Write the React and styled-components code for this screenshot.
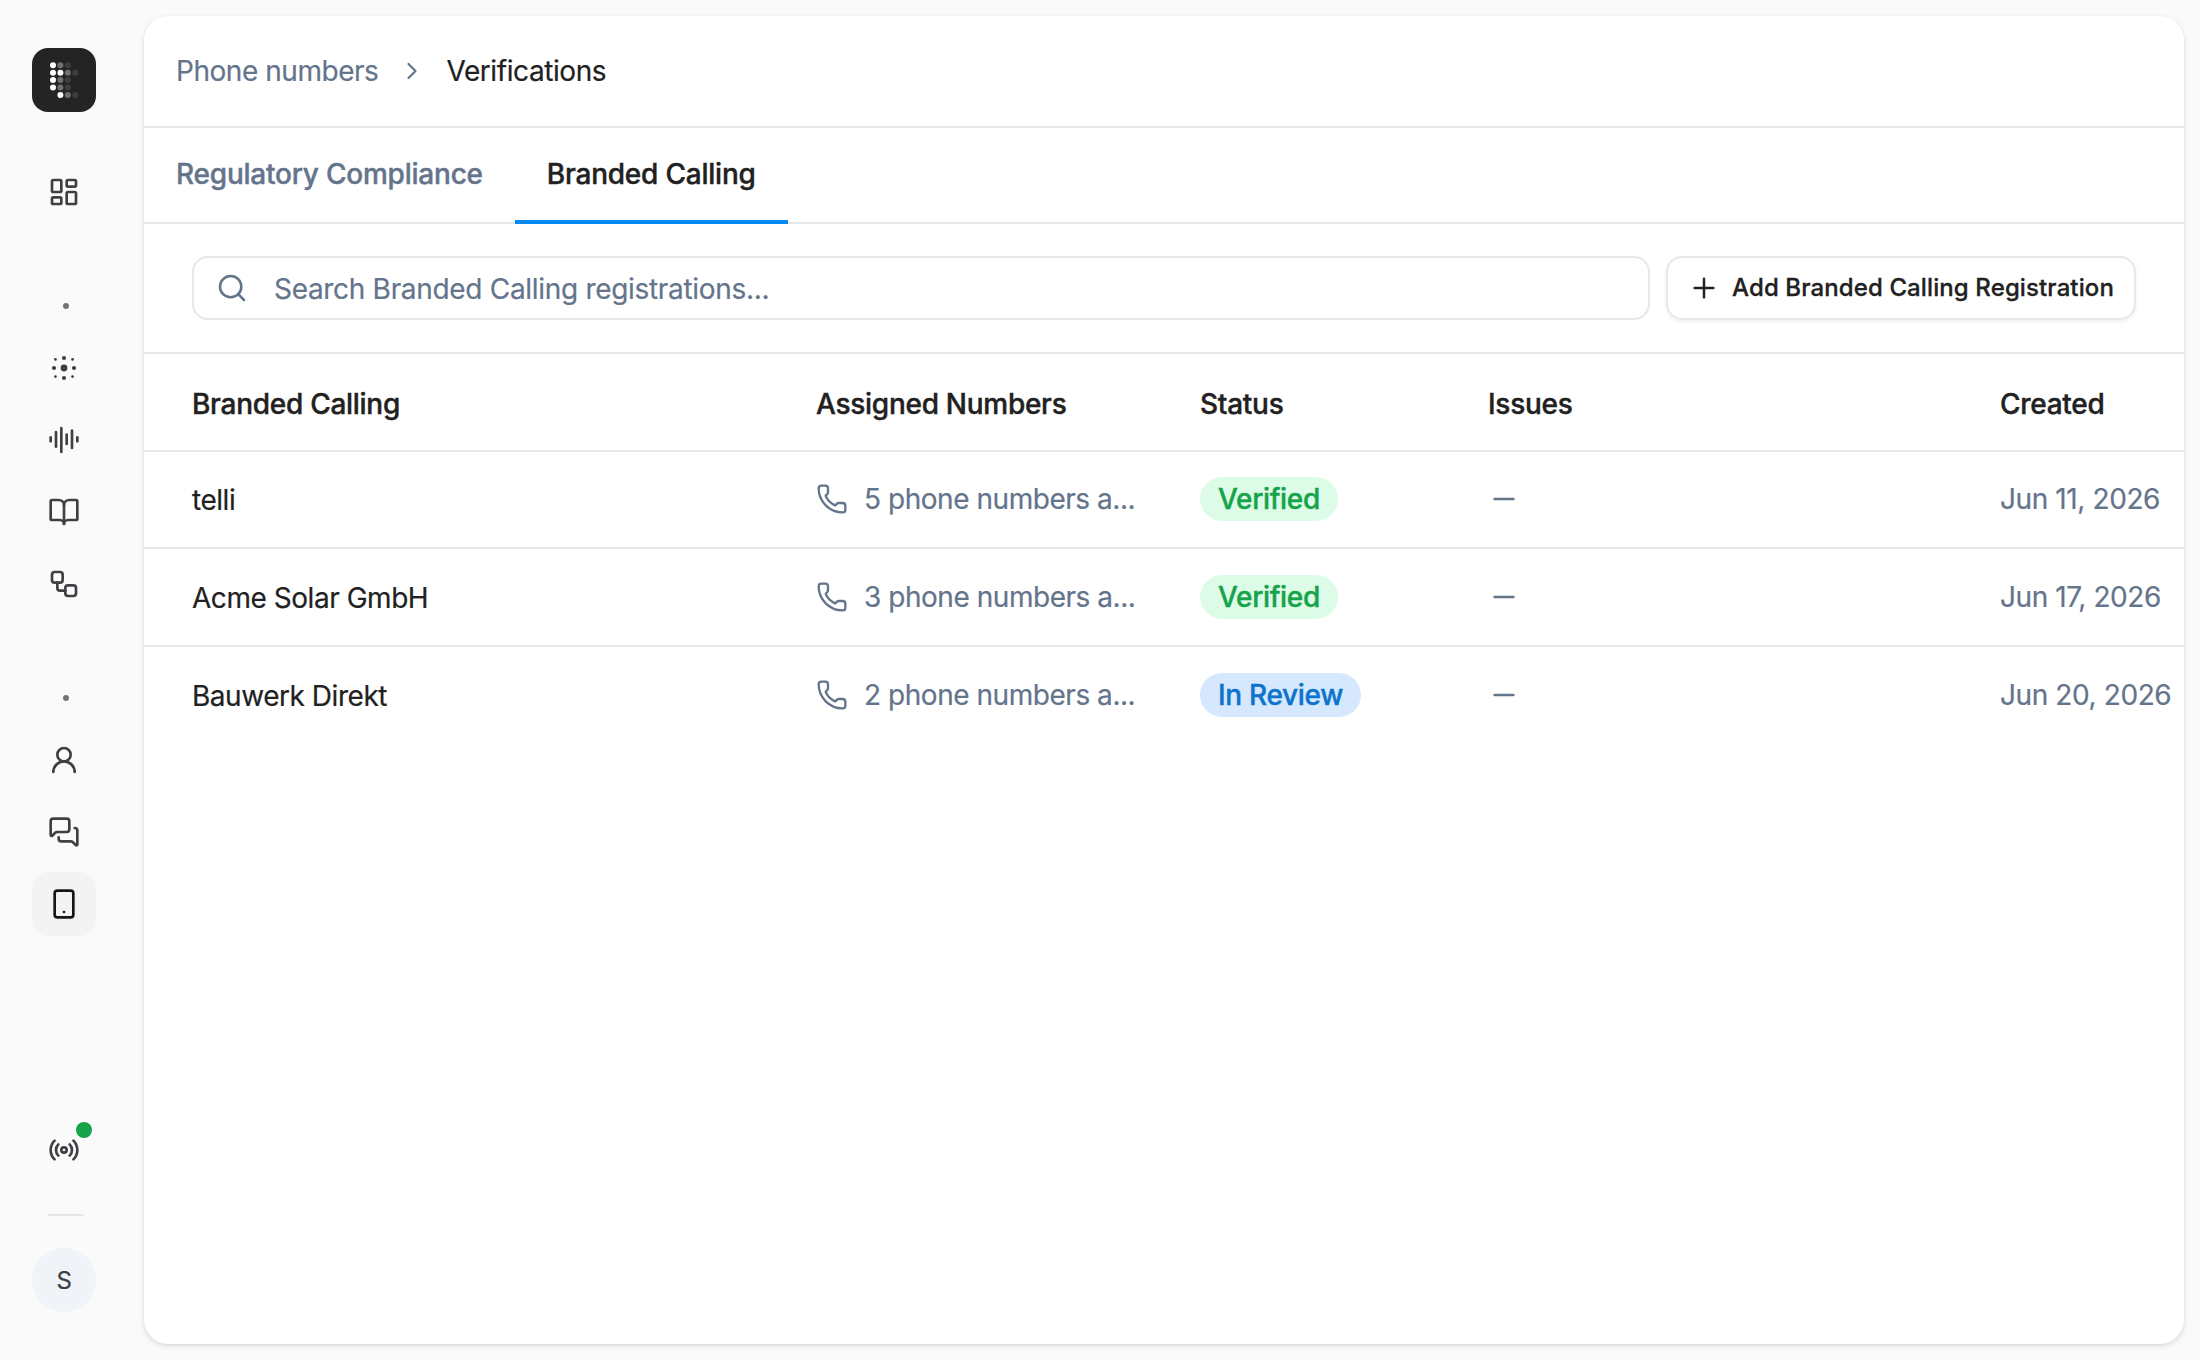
import React from 'react';
import styled, { createGlobalStyle, ThemeProvider } from 'styled-components';
import {
  AudioLines,
  BookOpen,
  ChevronRight,
  LayoutDashboard,
  MessagesSquare,
  Minus,
  Phone,
  Plus,
  Radio,
  Search,
  Smartphone,
  UserRound,
  Workflow,
} from 'lucide-react';

const theme = {
  colors: {
    page: '#fafafa',
    panel: '#ffffff',
    border: '#e2e8ec',
    text: '#212121',
    muted: '#64748b',
    icon: '#3e4044',
    accent: '#0588f0',
    online: '#16a34a',
  },
};

const resolveBadgeColors = status => {
  switch (status) {
    case 'Verified':
      return { background: '#dcfce7', color: '#16a34a' };
    default:
      return { background: '#d5e8fd', color: '#0d74ce' };
  }
};

const GlobalStyle = createGlobalStyle`
  * {
    box-sizing: border-box;
  }

  body {
    margin: 0;
    background: #fafafa;
    font-family: Inter, "Liberation Sans", sans-serif;
    font-size: 28px;
    line-height: 40px;
    letter-spacing: -0.46px;
    -webkit-text-stroke: 0.2px currentColor;
  }

  svg {
    flex-shrink: 0;
  }
`;

const Page = styled.div`
  display: flex;
  height: 1360px;
  padding: 16px 16px 16px 0;
  background: ${props => props.theme.colors.page};
  color: ${props => props.theme.colors.text};
`;

const Sidebar = styled.nav`
  display: flex;
  flex-direction: column;
  width: 144px;
  padding: 32px 48px 32px 32px;
`;

const Logo = styled.div`
  display: flex;
  width: 64px;
  height: 64px;
  margin-bottom: 48px;
  border-radius: 16px;
  background: #242424;
`;

const NavGroup = styled.div`
  display: flex;
  flex-direction: column;
  gap: 8px;
`;

const NavItem = styled.div`
  display: flex;
  align-items: center;
  justify-content: center;
  position: relative;
  width: 64px;
  height: 64px;
  border-radius: 16px;
  background: ${props => (props.$active ? '#f3f3f3' : 'transparent')};
  color: ${props => (props.$active ? '#171717' : props.theme.colors.icon)};
`;

const GroupDot = styled.div`
  width: 6px;
  height: 6px;
  margin: 79px 0 27px 31px;
  border-radius: 50%;
  background: #737373;
`;

const OnlineDot = styled.span`
  position: absolute;
  top: 4px;
  right: 4px;
  width: 16px;
  height: 16px;
  border-radius: 50%;
  background: ${props => props.theme.colors.online};
`;

const Push = styled.div`
  flex: 1;
`;

const Divider = styled.div`
  width: 36px;
  height: 2px;
  margin: 32px 0 32px 16px;
  background: #e4e6ea;
`;

const Avatar = styled.div`
  display: flex;
  align-items: center;
  justify-content: center;
  width: 64px;
  height: 64px;
  padding-top: 1px;
  border-radius: 50%;
  background: #f0f4f9;
  color: ${props => props.theme.colors.icon};
  font-size: 24px;
`;

const Panel = styled.main`
  display: flex;
  flex-direction: column;
  flex: 1;
  min-width: 0;
  overflow: hidden;
  border-radius: 24px;
  background: ${props => props.theme.colors.panel};
  box-shadow: 0 2px 6px rgba(0, 0, 0, 0.1), 0 1px 3px rgba(0, 0, 0, 0.06);
`;

const Breadcrumbs = styled.div`
  display: flex;
  align-items: center;
  height: 112px;
  padding: 0 32px;
  border-bottom: 2px solid ${props => props.theme.colors.border};
  color: ${props => props.theme.colors.muted};

  svg {
    margin: 0 20px;
  }
`;

const CurrentCrumb = styled.span`
  color: ${props => props.theme.colors.text};
  letter-spacing: -0.42px;
`;

const Tabs = styled.div`
  display: flex;
  height: 96px;
  box-shadow: inset 0 -2px ${props => props.theme.colors.border};
`;

const Tab = styled.div`
  display: flex;
  align-items: center;
  padding: 0 32px ${props => (props.$active ? 0 : 4)}px;
  border-bottom: ${props => (props.$active ? `4px solid ${props.theme.colors.accent}` : 'none')};
  color: ${props => (props.$active ? props.theme.colors.text : props.theme.colors.muted)};
  font-weight: 500;
  letter-spacing: -0.22px;
  -webkit-text-stroke-width: 0.4px;
`;

const Toolbar = styled.div`
  display: flex;
  gap: 16px;
  height: 130px;
  padding: 32px 48px;
  border-bottom: 2px solid ${props => props.theme.colors.border};
`;

const SearchField = styled.div`
  display: flex;
  align-items: center;
  flex: 1;
  gap: 26px;
  padding: 0 22px;
  border: 2px solid ${props => props.theme.colors.border};
  border-radius: 16px;
  color: ${props => props.theme.colors.muted};
  letter-spacing: -0.31px;
`;

const SearchPlaceholder = styled.span`
  padding-top: 2px;
`;

const AddButton = styled.div`
  display: flex;
  align-items: center;
  gap: 12px;
  width: 470px;
  padding: 0 20px;
  border: 2px solid ${props => props.theme.colors.border};
  border-radius: 16px;
  box-shadow: 0 2px 4px rgba(0, 0, 0, 0.06);
  font-size: 24px;
  font-weight: 500;
  letter-spacing: 0.11px;
  white-space: nowrap;
  -webkit-text-stroke-width: 0.3px;
`;

const Row = styled.div`
  display: grid;
  grid-template-columns: 624px 384px 288px 512px 1fr;
  align-items: center;
  height: ${props => (props.$first ? 97 : 98)}px;
  padding: 0 0 ${props => (props.$first ? 1 : 0)}px 48px;
  border-bottom: 2px solid ${props => (props.$last ? 'transparent' : props.theme.colors.border)};
  white-space: nowrap;
`;

const HeaderRow = styled(Row)`
  padding-top: 4px;
  font-weight: 500;
  letter-spacing: -0.28px;
  -webkit-text-stroke-width: 0.4px;
`;

const Cell = styled.div`
  display: flex;
  align-items: center;
  gap: 16px;
  color: ${props => (props.$muted ? props.theme.colors.muted : 'inherit')};
`;

const NameCell = styled(Cell)`
  padding-top: 2px;
`;

const DateCell = styled(Cell)`
  letter-spacing: -0.4px;
`;

const Badge = styled.span`
  height: 44px;
  padding: 0 18px;
  border-radius: 22px;
  background: ${props => resolveBadgeColors(props.$status).background};
  color: ${props => resolveBadgeColors(props.$status).color};
  font-weight: 500;
  letter-spacing: -0.32px;
  line-height: 44px;
  -webkit-text-stroke-width: 0.4px;
`;

const registrations = [
  { name: 'telli', numbers: 5, status: 'Verified', created: 'Jun 11, 2026' },
  { name: 'Acme Solar GmbH', numbers: 3, status: 'Verified', created: 'Jun 17, 2026' },
  { name: 'Bauwerk Direkt', numbers: 2, status: 'In Review', created: 'Jun 20, 2026' },
];

// opacity of each dot, row by row
const logoDots = [
  [1, 0.35, 0.12, 0],
  [1, 1, 0.35, 0.12],
  [1, 0.35, 0.12, 0],
  [1, 0.35, 0.12, 0],
  [0, 1, 0.35, 0.12],
];

const LogoMark = () => (
  <svg width="64" height="64" viewBox="0 0 64 64" fill="#fff">
    {logoDots.map((row, y) =>
      row.map((opacity, x) => (
        <circle key={`${x}-${y}`} cx={21 + x * 7.4} cy={17.2 + y * 7.45} r="3" opacity={opacity} />
      ))
    )}
  </svg>
);

const AgentIcon = () => (
  <svg width="32" height="32" viewBox="0 0 32 32" fill="currentColor">
    <circle cx="16" cy="16" r="3.4" />
    {[[16, 6], [16, 26], [6, 16], [26, 16]].map(([x, y]) => (
      <circle key={`${x}-${y}`} cx={x} cy={y} r="2.1" />
    ))}
    {[[7.4, 7.4], [24.6, 7.4], [7.4, 24.6], [24.6, 24.6]].map(([x, y]) => (
      <circle key={`${x}-${y}`} cx={x} cy={y} r="1.4" />
    ))}
  </svg>
);

const navIcon = { size: 32, strokeWidth: 2 };

const App = () => (
  <ThemeProvider theme={theme}>
    <GlobalStyle />
    <Page>
      <Sidebar>
        <Logo>
          <LogoMark />
        </Logo>
        <NavItem>
          <LayoutDashboard {...navIcon} />
        </NavItem>
        <GroupDot />
        <NavGroup>
          <NavItem>
            <AgentIcon />
          </NavItem>
          <NavItem>
            <AudioLines {...navIcon} />
          </NavItem>
          <NavItem>
            <BookOpen {...navIcon} />
          </NavItem>
          <NavItem>
            <Workflow {...navIcon} />
          </NavItem>
        </NavGroup>
        <GroupDot />
        <NavGroup>
          <NavItem>
            <UserRound {...navIcon} />
          </NavItem>
          <NavItem>
            <MessagesSquare {...navIcon} />
          </NavItem>
          <NavItem $active>
            <Smartphone {...navIcon} />
          </NavItem>
        </NavGroup>
        <Push />
        <NavItem>
          <Radio {...navIcon} />
          <OnlineDot />
        </NavItem>
        <Divider />
        <Avatar>S</Avatar>
      </Sidebar>
      <Panel>
        <Breadcrumbs>
          <span>Phone numbers</span>
          <ChevronRight size={28} strokeWidth={1.85} />
          <CurrentCrumb>Verifications</CurrentCrumb>
        </Breadcrumbs>
        <Tabs>
          <Tab>Regulatory Compliance</Tab>
          <Tab $active>Branded Calling</Tab>
        </Tabs>
        <Toolbar>
          <SearchField>
            <Search size={32} strokeWidth={1.9} />
            <SearchPlaceholder>Search Branded Calling registrations...</SearchPlaceholder>
          </SearchField>
          <AddButton>
            <Plus size={32} strokeWidth={1.85} />
            Add Branded Calling Registration
          </AddButton>
        </Toolbar>
        <HeaderRow>
          <Cell>Branded Calling</Cell>
          <Cell>Assigned Numbers</Cell>
          <Cell>Status</Cell>
          <Cell>Issues</Cell>
          <Cell>Created</Cell>
        </HeaderRow>
        {registrations.map((item, index) => (
          <Row key={item.name} $first={index === 0} $last={index === registrations.length - 1}>
            <NameCell>{item.name}</NameCell>
            <Cell $muted>
              <Phone size={32} strokeWidth={1.75} />
              {item.numbers} phone numbers a...
            </Cell>
            <Cell>
              <Badge $status={item.status}>{item.status}</Badge>
            </Cell>
            <Cell $muted>
              <Minus size={32} strokeWidth={2} />
            </Cell>
            <DateCell $muted>{item.created}</DateCell>
          </Row>
        ))}
      </Panel>
    </Page>
  </ThemeProvider>
);

export default App;
